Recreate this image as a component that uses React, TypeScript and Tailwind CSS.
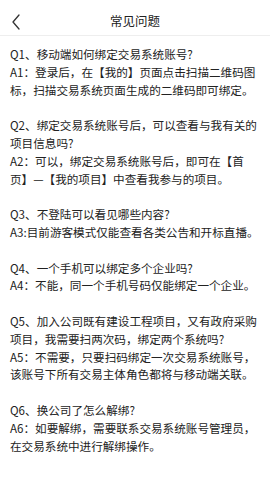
import React from 'react';

const faqs = [
  {
    q: 'Q1、移动端如何绑定交易系统账号?',
    a: 'A1：登录后，在【我的】页面点击扫描二维码图标，扫描交易系统页面生成的二维码即可绑定。',
  },
  {
    q: 'Q2、绑定交易系统账号后，可以查看与我有关的项目信息吗?',
    a: 'A2：可以，绑定交易系统账号后，即可在【首页】—【我的项目】中查看我参与的项目。',
  },
  {
    q: 'Q3、不登陆可以看见哪些内容?',
    a: 'A3:目前游客模式仅能查看各类公告和开标直播。',
  },
  {
    q: 'Q4、一个手机可以绑定多个企业吗?',
    a: 'A4：不能，同一个手机号码仅能绑定一个企业。',
  },
  {
    q: 'Q5、加入公司既有建设工程项目，又有政府采购项目，我需要扫两次码，绑定两个系统吗?',
    a: 'A5：不需要，只要扫码绑定一次交易系统账号，该账号下所有交易主体角色都将与移动端关联。',
  },
  {
    q: 'Q6、换公司了怎么解绑?',
    a: 'A6：如要解绑，需要联系交易系统账号管理员，在交易系统中进行解绑操作。',
  },
];

const App: React.FC = () => {
  return (
    <div className="min-h-[480px] bg-white text-[#222] font-['Noto_Sans_CJK_SC',sans-serif]">
      <header className="relative flex h-[36px] items-center justify-center border-b border-[#eeeeee] pt-[8px]">
        <button className="absolute left-[10px] top-[13px] text-[#333]">
          <svg width="12" height="18" viewBox="0 0 12 18" fill="none">
            <path d="M9 2L3 9l6 7" stroke="currentColor" strokeWidth="1.3" strokeLinecap="round" strokeLinejoin="round" />
          </svg>
        </button>
        <h1 className="text-[12.5px] text-[#222]">常见问题</h1>
      </header>
      <div className="flex flex-col gap-[17.8px] px-[10px] pt-[10px] text-[11.6px] leading-[17.8px]">
        {faqs.map((f, i) => (
          <div key={i}>
            <p>{f.q}</p>
            <p>{f.a}</p>
          </div>
        ))}
      </div>
    </div>
  );
};

export default App;
